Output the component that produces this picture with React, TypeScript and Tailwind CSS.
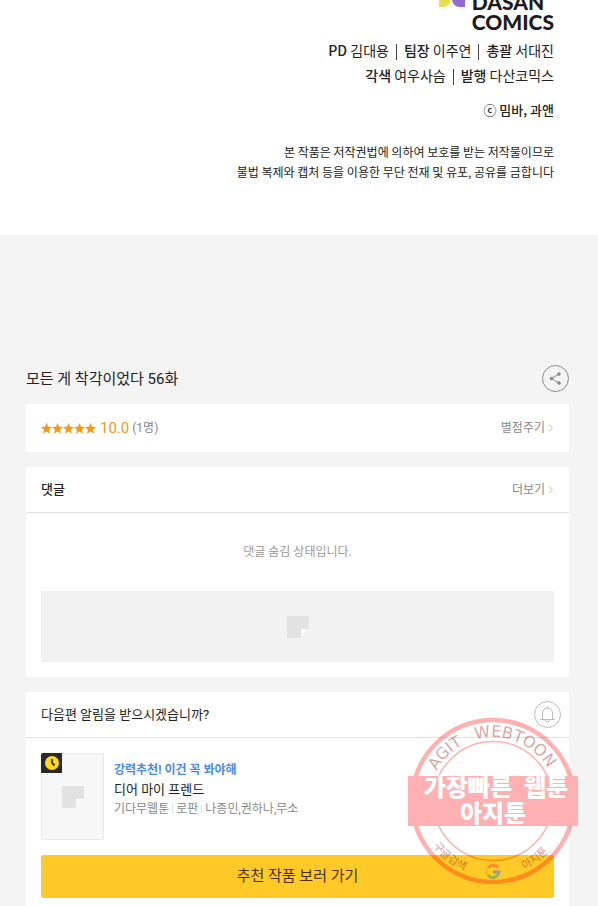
import { ChevronRight } from "lucide-react";

function Logo() {
    return (
        <div className="flex h-8 items-end justify-end gap-[5px] overflow-hidden">
            <svg className="mb-[25px] h-7 w-7" viewBox="0 0 28 28" aria-hidden="true">
                <path d="M0 14h12v6a8 8 0 0 1-8 8H0z" fill="#e9df4e" />
                <path d="M13 14h13v14h-5a8 8 0 0 1-8-8z" fill="#9169cf" />
            </svg>
            <p className="text-left font-[Lato,sans-serif] text-[21px] leading-5 font-black text-[#1c1c1c]">
                DASAN
                <br />
                COMICS
            </p>
        </div>
    );
}

function Divider() {
    return <span className="mx-[7px] inline-block h-4 w-px bg-[#444] align-middle" />;
}

function Credits() {
    return (
        <section className="h-[235px] bg-white pr-11 text-right font-['Noto_Sans_CJK_KR',sans-serif] text-[#222]">
            <Logo />
            <div className="mt-[6px] text-sm leading-[25px]">
                <p>
                    <b className="font-medium">PD</b> 김대용
                    <Divider />
                    <b className="font-medium">팀장</b> 이주연
                    <Divider />
                    <b className="font-medium">총괄</b> 서대진
                </p>
                <p>
                    <b className="font-medium">각색</b> 여우사슴
                    <Divider />
                    <b className="font-medium">발행</b> 다산코믹스
                </p>
            </div>
            <p className="mt-3 text-[13px] leading-5 font-medium">ⓒ 밈바, 과앤</p>
            <p className="mt-[22px] text-xs leading-5">
                본 작품은 저작권법에 의하여 보호를 받는 저작물이므로
                <br />
                불법 복제와 캡처 등을 이용한 무단 전재 및 유포, 공유를 금합니다
            </p>
        </section>
    );
}

function Stars() {
    return (
        <span className="flex" role="img" aria-label="5">
            {[0, 1, 2, 3, 4].map((i) => (
                <svg key={i} className="h-[11px] w-[11px]" viewBox="0 0 24 24" fill="#f49a1a">
                    <path d="M12 0l3.4 8.2 8.6.7-6.5 5.7 2 8.6L12 18.6l-7.5 4.6 2-8.6L0 8.9l8.6-.7z" />
                </svg>
            ))}
        </span>
    );
}

function NoteMark() {
    return (
        <svg className="h-[22px] w-[22px]" viewBox="0 0 22 22" aria-hidden="true">
            <path d="M0 0h22v13h-8v9H0z" fill="#e2e2e2" />
            <path d="M14 13h7l-7 8z" fill="#fafafa" />
        </svg>
    );
}

function MoreLink({ label }: { label: string }) {
    return (
        <a href="#" className="-mr-[3px] flex items-center text-xs text-[#888]">
            {label}
            <ChevronRight className="h-3 w-3 text-[#bbb]" strokeWidth={2} />
        </a>
    );
}

function Stamp() {
    return (
        <div className="pointer-events-none absolute top-[24px] -right-[9px] h-[170px] w-[170px]">
            <svg className="h-full w-full" viewBox="0 0 170 170">
                <defs>
                    <path id="stamp-top" d="M21 85a64 64 0 0 1 128 0" />
                    <path id="stamp-bottom" d="M10 85a75 75 0 0 0 150 0" />
                </defs>
                <g fill="none" stroke="#ff0000" strokeOpacity="0.31">
                    <circle cx="85" cy="85" r="81" strokeWidth="4.5" />
                    <circle cx="85" cy="85" r="59.5" strokeWidth="1.5" />
                </g>
                <g fill="#a01010" fillOpacity="0.4" textAnchor="middle">
                    <text fontFamily="DejaVu Sans" fontSize="16">
                        <textPath href="#stamp-top" startOffset="25%">AGIT</textPath>
                    </text>
                    <text fontFamily="DejaVu Sans" fontSize="16">
                        <textPath href="#stamp-top" startOffset="62%">WEBTOON</textPath>
                    </text>
                    <text fontSize="11" fontWeight="500">
                        <textPath href="#stamp-bottom" startOffset="29%">구글검색</textPath>
                    </text>
                    <text fontSize="11" fontWeight="500">
                        <textPath href="#stamp-bottom" startOffset="70%">아지툰</textPath>
                    </text>
                </g>
                <g fill="none" strokeWidth="3" opacity="0.6">
                    <path d="M90 152a6 6 0 0 0-10 0" stroke="#f36b35" />
                    <path d="M80 152a6 6 0 0 0 0 7" stroke="#e8b500" />
                    <path d="M80 159a6 6 0 0 0 9 1" stroke="#55a656" />
                    <path d="M85 156h6a6 6 0 0 1-2 4" stroke="#5a86c8" />
                </g>
                <rect y="60" width="170" height="50" fill="#ffb0b3" />
                <g fill="#fff" fontWeight="900" textAnchor="middle" fontSize="24">
                    <text x="73" y="80" textAnchor="end" dx="31">가장빠른</text>
                    <text x="138" y="80">웹툰</text>
                    <text x="85" y="106">아지툰</text>
                </g>
            </svg>
        </div>
    );
}

export default function App() {
    return (
        <div className="flex min-h-screen flex-col bg-[#f4f4f4] font-[Roboto,'Noto_Sans_CJK_KR',sans-serif] text-[#222]">
            <Credits />

            <main className="flex flex-1 flex-col pt-[130px] pr-[29px] pl-[26px]">
                {/* Episode title */}
                <header className="mb-3 flex h-[27px] items-center justify-between">
                    <h1 className="pt-[2px] text-[15px]">모든 게 착각이었다 56화</h1>
                    <button aria-label="공유" className="flex h-[27px] w-[27px] items-center justify-center rounded-full border border-[#888]">
                        <svg className="h-[13px] w-[13px]" viewBox="0 0 13 13" fill="#888" stroke="#888">
                            <path d="M10 2L2.5 6.5l7.5 4.5" fill="none" />
                            <circle cx="10" cy="2" r="1.3" />
                            <circle cx="2.5" cy="6.5" r="1.3" />
                            <circle cx="10" cy="11" r="1.3" />
                        </svg>
                    </button>
                </header>

                {/* Rating */}
                <section className="mb-[15px] flex h-12 items-center justify-between rounded-xs bg-white px-[15px]">
                    <div className="flex items-center">
                        <Stars />
                        <span className="ml-1 text-[15px] text-[#f49a1a]">10.0</span>
                        <span className="ml-[3px] text-xs text-[#888]">(1명)</span>
                    </div>
                    <MoreLink label="별점주기" />
                </section>

                {/* Comments */}
                <section className="mb-[15px] rounded-xs bg-white">
                    <div className="flex h-[46px] items-center justify-between border-b border-[#e0e0e0] px-[15px]">
                        <h2 className="text-[13px] font-medium">댓글</h2>
                        <MoreLink label="더보기" />
                    </div>
                    <p className="py-[29px] text-center text-xs leading-5 text-[#999]">댓글 숨김 상태입니다.</p>
                    <div className="px-[15px] pb-[15px]">
                        <div className="flex h-[71px] items-center justify-center bg-[#f2f2f2]">
                            <NoteMark />
                        </div>
                    </div>
                </section>

                {/* Next episode alert */}
                <section className="relative flex-1 rounded-t-xs bg-white">
                    <div className="flex h-[46px] items-center justify-between border-b border-[#e0e0e0] pr-2 pl-[15px]">
                        <h2 className="text-[13px]">다음편 알림을 받으시겠습니까?</h2>
                        <button aria-label="알림" className="flex h-[27px] w-[27px] items-center justify-center rounded-full border border-[#bbb]">
                            <svg className="h-[17px] w-[17px]" viewBox="0 0 17 17" fill="none" stroke="#bbb">
                                <path d="M1 13.5h15M3.5 13.5V7a5 5 0 0 1 10 0v6.5M8.5 2V.5M6.5 14a2 2 0 0 0 4 0" />
                            </svg>
                        </button>
                    </div>
                    <div className="px-[15px] pt-[15px] pb-2">
                        <a href="#" className="flex">
                            <div className="relative flex h-[87px] w-[63px] items-center justify-center rounded-xs border border-[#e9e9e9] bg-[#f7f7f7]">
                                <NoteMark />
                                <span className="absolute -top-px -left-px flex h-5 w-[21px] items-center justify-center rounded-tl-xs bg-[#292929]">
                                    <svg className="h-[14px] w-[14px]" viewBox="0 0 14 14">
                                        <circle cx="7" cy="7" r="7" fill="#ffd91a" />
                                        <path d="M7 3v4l2.5 2.5" fill="none" stroke="#292929" strokeWidth="1.8" />
                                    </svg>
                                </span>
                            </div>
                            <div className="ml-[10px] pt-[7px]">
                                <p className="text-xs leading-5 font-bold text-[#4a8bea]">강력추천! 이건 꼭 봐야해</p>
                                <p className="text-[13px] leading-5">디어 마이 프렌드</p>
                                <p className="flex items-center gap-[3px] text-xs leading-[18px] text-[#888]">
                                    기다무웹툰
                                    <span className="h-2 w-px bg-[#ddd]" />
                                    로판
                                    <span className="h-2 w-px bg-[#ddd]" />
                                    나종민,권하나,무소
                                </p>
                            </div>
                        </a>
                        <button className="mt-[15px] h-[43px] w-full rounded-xs bg-[#ffca28] text-[15px] text-[#4a2c12]">
                            추천 작품 보러 가기
                        </button>
                    </div>
                    <Stamp />
                </section>
            </main>
        </div>
    );
}
